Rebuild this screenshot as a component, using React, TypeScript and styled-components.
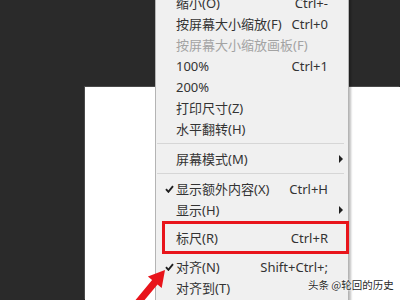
import styled, { createGlobalStyle } from "styled-components";

const GlobalStyle = createGlobalStyle`
  html, body {
    margin: 0;
    padding: 0;
    background: #2a2a2a;
  }
`;

const Workspace = styled.div`
  position: relative;
  width: 400px;
  height: 300px;
  overflow: hidden;
  box-sizing: border-box;
  padding: 87px 0 0 85px;
  background: #2a2a2a;
  display: flex;
  font-family: "Noto Sans", "Noto Sans CJK SC", sans-serif;
`;

const Canvas = styled.div`
  flex: 1;
  background: #ffffff;
  box-shadow: -1px -1px 0 #4a4a4a;
`;

const Menu = styled.div`
  position: absolute;
  left: 155px;
  top: -12px;
  width: 194px;
  box-sizing: border-box;
  padding: 3px 0;
  background: #f0f0f0;
  border: 1px solid #b4b4b4;
  box-shadow: 2px 2px 2px rgba(0, 0, 0, 0.25);
`;

const Row = styled.div<{ $disabled?: boolean; $highlight?: boolean }>`
  position: relative;
  display: grid;
  grid-template-columns: 20px 1fr auto 20px;
  align-items: center;
  height: 21px;
  margin: ${(p) => (p.$highlight ? "7px 0 8px" : "0")};
  font-size: 13px;
  color: ${(p) => (p.$disabled ? "#a3a3a3" : "#333333")};
  white-space: nowrap;

  &::after {
    content: "";
    display: ${(p) => (p.$highlight ? "block" : "none")};
    position: absolute;
    top: -6px;
    bottom: -6px;
    left: 6px;
    right: -1px;
    border: 3px solid #e8151b;
  }
`;

const Check = styled.span`
  display: flex;
  justify-content: flex-end;
  padding-right: 2px;
`;

const Label = styled.span``;

const Shortcut = styled.span`
  text-align: right;
`;

const Submenu = styled.span`
  display: flex;
  justify-content: center;
  padding-left: 6px;

  &::before {
    content: "";
    width: 0;
    height: 0;
    border-left: 4px solid #1f1f1f;
    border-top: 4px solid transparent;
    border-bottom: 4px solid transparent;
  }
`;

const Separator = styled.div`
  height: 1px;
  margin: 4px 4px 4px 1px;
  background: #d6d6d6;
`;

const Arrow = styled.svg`
  position: absolute;
  left: 130px;
  top: 262px;
`;

const Watermark = styled.div`
  position: absolute;
  left: 308px;
  top: 277px;
  font-family: "Noto Sans CJK SC", sans-serif;
  font-size: 10.5px;
  color: #2a2a2a;
  text-shadow: 0 0 2px #fff, 0 0 2px #fff;
  white-space: nowrap;
`;

type Item =
  | { sep: true }
  | {
      sep?: false;
      label: string;
      shortcut?: string;
      checked?: boolean;
      disabled?: boolean;
      submenu?: boolean;
      highlight?: boolean;
    };

const items: Item[] = [
  { label: "缩小(O)", shortcut: "Ctrl+-" },
  { label: "按屏幕大小缩放(F)", shortcut: "Ctrl+0" },
  { label: "按屏幕大小缩放画板(F)", disabled: true },
  { label: "100%", shortcut: "Ctrl+1" },
  { label: "200%" },
  { label: "打印尺寸(Z)" },
  { label: "水平翻转(H)" },
  { sep: true },
  { label: "屏幕模式(M)", submenu: true },
  { sep: true },
  { label: "显示额外内容(X)", shortcut: "Ctrl+H", checked: true },
  { label: "显示(H)", submenu: true },
  { label: "标尺(R)", shortcut: "Ctrl+R", highlight: true },
  { label: "对齐(N)", shortcut: "Shift+Ctrl+;", checked: true },
  { label: "对齐到(T)" },
];

const CheckIcon = () => (
  <svg width="9" height="8" viewBox="0 0 9 8">
    <path d="M1 4.2 L3.4 6.8 L8 1.2" fill="none" stroke="#1f1f1f" strokeWidth="1.9" />
  </svg>
);

export default function App() {
  return (
    <>
      <GlobalStyle />
      <Workspace>
        <Canvas />
        <Menu>
          {items.map((it, i) =>
            it.sep ? (
              <Separator key={i} />
            ) : (
              <Row key={i} $disabled={it.disabled} $highlight={it.highlight}>
                <Check>{it.checked && <CheckIcon />}</Check>
                <Label>{it.label}</Label>
                <Shortcut>{it.shortcut}</Shortcut>
                {it.submenu ? <Submenu /> : <span />}
              </Row>
            )
          )}
        </Menu>
        <Arrow width="45" height="38" viewBox="0 0 45 38">
          <polygon
            points="35,8 31.7,26.1 27.5,22.5 5.7,48.7 0.3,44.3 22.1,18.1 17.9,14.5"
            fill="#e8141b"
          />
        </Arrow>
        <Watermark>头条 @轮回的历史</Watermark>
      </Workspace>
    </>
  );
}
